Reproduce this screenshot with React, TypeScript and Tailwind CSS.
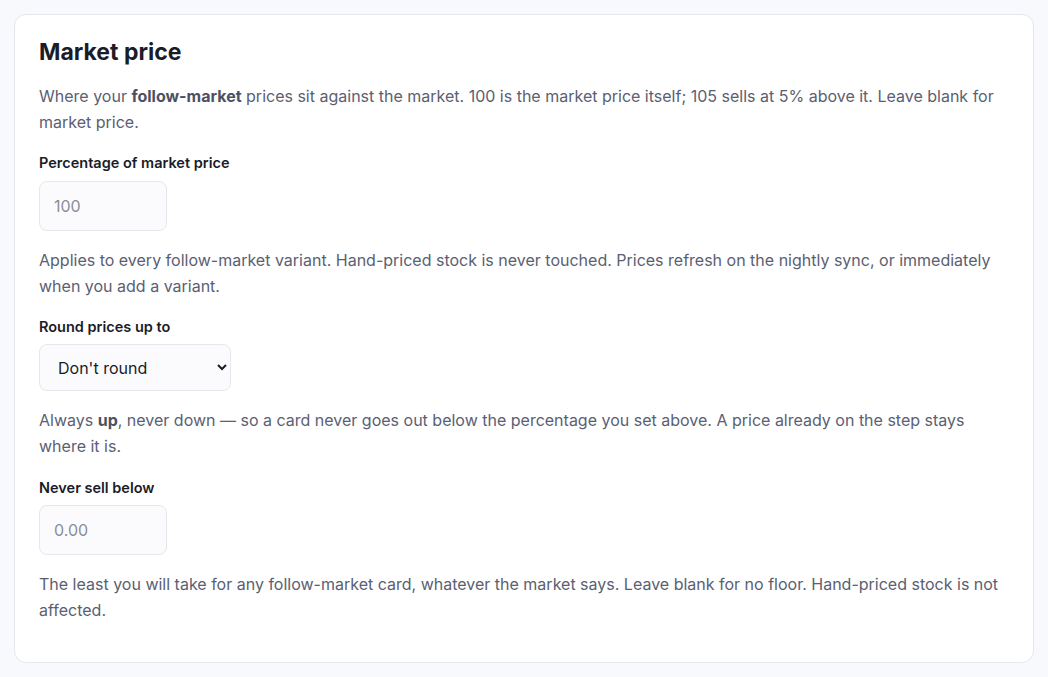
import React from "react";

export default function App() {
  return (
    <div
      className="min-h-[677px] bg-[#f8f9fc] p-[14px]"
      style={{ fontFamily: "Inter, 'Noto Sans', sans-serif" }}
    >
      <div className="rounded-[12px] border border-[#e6e7ee] bg-white px-6 pt-[23px] pb-[39px]">
        <h2 className="text-[23px] font-bold leading-[28px] text-[#1a1c28]">Market price</h2>
        <p className="mt-[17px] text-[16px] leading-[26px] text-[#5a6072]">
          Where your <strong className="font-bold text-[#4b5163]">follow-market</strong> prices sit against the market. 100 is the market price itself; 105 sells at 5% above it. Leave blank for market price.
        </p>

        <label className="mt-[18px] block text-[14.5px] font-semibold leading-[20px] text-[#1a1c28]">
          Percentage of market price
        </label>
        <input
          type="text"
          placeholder="100"
          className="mt-[8px] block h-[50px] w-[128px] rounded-[8px] border border-[#e6e7ee] bg-[#fbfbfe] px-[14px] text-[16px] text-[#1a1c28] placeholder:text-[#8a8d96] outline-none"
        />
        <p className="mt-4 text-[16px] leading-[26px] text-[#5a6072]">
          Applies to every follow-market variant. Hand-priced stock is never touched. Prices refresh on the nightly sync, or immediately when you add a variant.
        </p>

        <label className="mt-[18px] block text-[14.5px] font-semibold leading-[20px] text-[#1a1c28]">
          Round prices up to
        </label>
        <select
          defaultValue="none"
          className="mt-[7px] block h-[47px] w-[192px] rounded-[8px] border border-[#e6e7ee] bg-[#fbfbfe] pl-[14px] pr-[8px] text-[16px] text-[#1a1c28] outline-none"
        >
          <option value="none">Don't round</option>
          <option value="0.05">0.05</option>
          <option value="0.10">0.10</option>
          <option value="0.50">0.50</option>
          <option value="1.00">1.00</option>
        </select>
        <p className="mt-4 text-[16px] leading-[26px] text-[#5a6072]">
          Always <strong className="font-bold text-[#4b5163]">up</strong>, never down — so a card never goes out below the percentage you set above. A price already on the step stays where it is.
        </p>

        <label className="mt-[19px] block text-[14.5px] font-semibold leading-[20px] text-[#1a1c28]">
          Never sell below
        </label>
        <input
          type="text"
          placeholder="0.00"
          className="mt-[7px] block h-[50px] w-[128px] rounded-[8px] border border-[#e6e7ee] bg-[#fbfbfe] px-[14px] text-[16px] text-[#1a1c28] placeholder:text-[#8a8d96] outline-none"
        />
        <p className="mt-4 text-[16px] leading-[26px] text-[#5a6072]">
          The least you will take for any follow-market card, whatever the market says. Leave blank for no floor. Hand-priced stock is not affected.
        </p>
      </div>
    </div>
  );
}
